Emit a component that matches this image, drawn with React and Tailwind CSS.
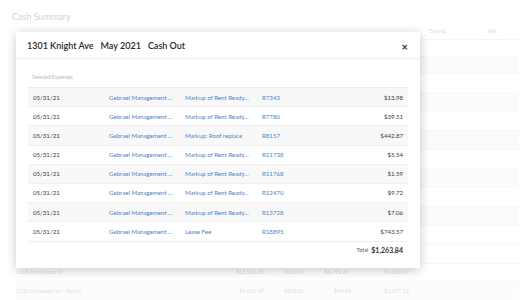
import React from "react";

const rows = [
  ["05/31/21", "Gebrael Management ...", "Markup of Rent Ready...", "R7343", "$13.98"],
  ["05/31/21", "Gebrael Management ...", "Markup of Rent Ready...", "R7780", "$39.51"],
  ["05/31/21", "Gebrael Management ...", "Markup: Roof replace", "R8157", "$442.87"],
  ["05/31/21", "Gebrael Management ...", "Markup of Rent Ready...", "R11738", "$5.54"],
  ["05/31/21", "Gebrael Management ...", "Markup of Rent Ready...", "R11768", "$1.59"],
  ["05/31/21", "Gebrael Management ...", "Markup of Rent Ready...", "R12470", "$9.72"],
  ["05/31/21", "Gebrael Management ...", "Markup of Rent Ready...", "R13728", "$7.06"],
  ["05/31/21", "Gebrael Management ...", "Lease Fee", "R18895", "$743.57"],
];

export default function App() {
  return (
    <div
      className="relative w-[527px] h-[300px] overflow-hidden bg-white"
      style={{ fontFamily: "Lato, 'Open Sans', sans-serif" }}
    >
      {/* faded background page */}
      <div className="flex flex-col h-full">
        <div className="pl-[12px] pt-[10px] h-[30px] text-[9px] text-[#d4d4d4]">Cash Summary</div>
        <div className="ml-[16px] mr-[8px] flex flex-col">
          <div className="h-[16px] flex items-center text-[5.5px] text-[#e0e0e0] border-b border-[#f6f6f6]">
            <span className="ml-[413px]">Ending</span>
            <span className="ml-[42px]">Net</span>
          </div>
          <div className="h-[17px] border-b border-[#f7f7f7]"></div>
          <div className="h-[17px] bg-[#fbfbfb] border-b border-[#f7f7f7]"></div>
          <div className="h-[19px] border-b border-[#f7f7f7]"></div>
          <div className="h-[19px] bg-[#fbfbfb] border-b border-[#f7f7f7]"></div>
          <div className="h-[19px] border-b border-[#f7f7f7]"></div>
          <div className="h-[19px] bg-[#fbfbfb] border-b border-[#f7f7f7]"></div>
          <div className="h-[19px] border-b border-[#f7f7f7]"></div>
          <div className="h-[19px] bg-[#fbfbfb] border-b border-[#f7f7f7]"></div>
          <div className="h-[19px] border-b border-[#f7f7f7]"></div>
          <div className="h-[19px] bg-[#fbfbfb] border-b border-[#f7f7f7]"></div>
          <div className="h-[19px] border-b border-[#f7f7f7]"></div>
          <div className="h-[19px] border-b border-[#f7f7f7]"></div>
          <div className="h-[18px] flex items-center text-[5.5px] text-[#dcdcdc] border-b border-[#f7f7f7]">
            <span className="w-[180px] text-[#d8e3f0]">1301 Knollwood Dr</span>
            <span className="w-[68px] text-right">$13,506.20</span>
            <span className="w-[60px] pl-[20px] text-[#d8e3f0]">R80230</span>
            <span className="w-[60px]">$4,791.21</span>
            <span className="w-[60px]">$9,283.47</span>
          </div>
          <div className="h-[18px] flex items-center text-[5.5px] text-[#dcdcdc] bg-[#fcfcfc]">
            <span className="w-[180px] text-[#d8e3f0]">2230 Oakwood Ln - Rental</span>
            <span className="w-[68px] text-right">$4,921.47</span>
            <span className="w-[60px] pl-[20px] text-[#d8e3f0]">R80226</span>
            <span className="w-[60px] pl-[10px]">$44.34</span>
            <span className="w-[60px]">$5,677.12</span>
          </div>
        </div>
      </div>

      {/* modal */}
      <div className="absolute left-[16px] top-[32px] w-[404px] h-[236px] bg-white shadow-[0_2px_10px_rgba(0,0,0,0.22)] flex flex-col">
        <div className="h-[27px] shrink-0 flex items-center justify-between pl-[11px] pr-[12px] border-b border-[#ececec]">
          <div className="text-[9px] font-semibold text-[#2a2a2a] flex gap-[7px] pt-[2px]">
            <span>1301 Knight Ave</span>
            <span>May 2021</span>
            <span>Cash Out</span>
          </div>
          <span className="text-[11px] font-bold text-[#333] leading-none pt-[2px]">×</span>
        </div>
        <div className="px-[12px] pt-[15px] flex flex-col">
          <div className="h-[14px] text-[5px] text-[#b8b8b8] pl-[4px] border-b border-[#ececec]">Selected Expenses</div>
          {rows.map((r, i) => (
            <div
              key={i}
              className={`h-[19.2px] grid grid-cols-[76px_76px_77px_1fr_auto] items-center px-[5px] text-[6.1px] border-b border-[#efefef] ${i % 2 === 0 ? "bg-[#f8f8f8]" : "bg-white"}`}
            >
              <span className="text-[#3a3a3a]">{r[0]}</span>
              <span className="text-[#4a84c4] whitespace-nowrap overflow-hidden">{r[1]}</span>
              <span className="text-[#4a84c4] whitespace-nowrap overflow-hidden">{r[2]}</span>
              <span className="text-[#4a84c4]">{r[3]}</span>
              <span className="text-[#3a3a3a] text-right">{r[4]}</span>
            </div>
          ))}
          <div className="h-[18px] flex items-center justify-end px-[5px] gap-[3px]">
            <span className="text-[5.5px] text-[#555]">Total</span>
            <span className="text-[7px] font-bold text-[#333]">$1,263.84</span>
          </div>
        </div>
      </div>
    </div>
  );
}
